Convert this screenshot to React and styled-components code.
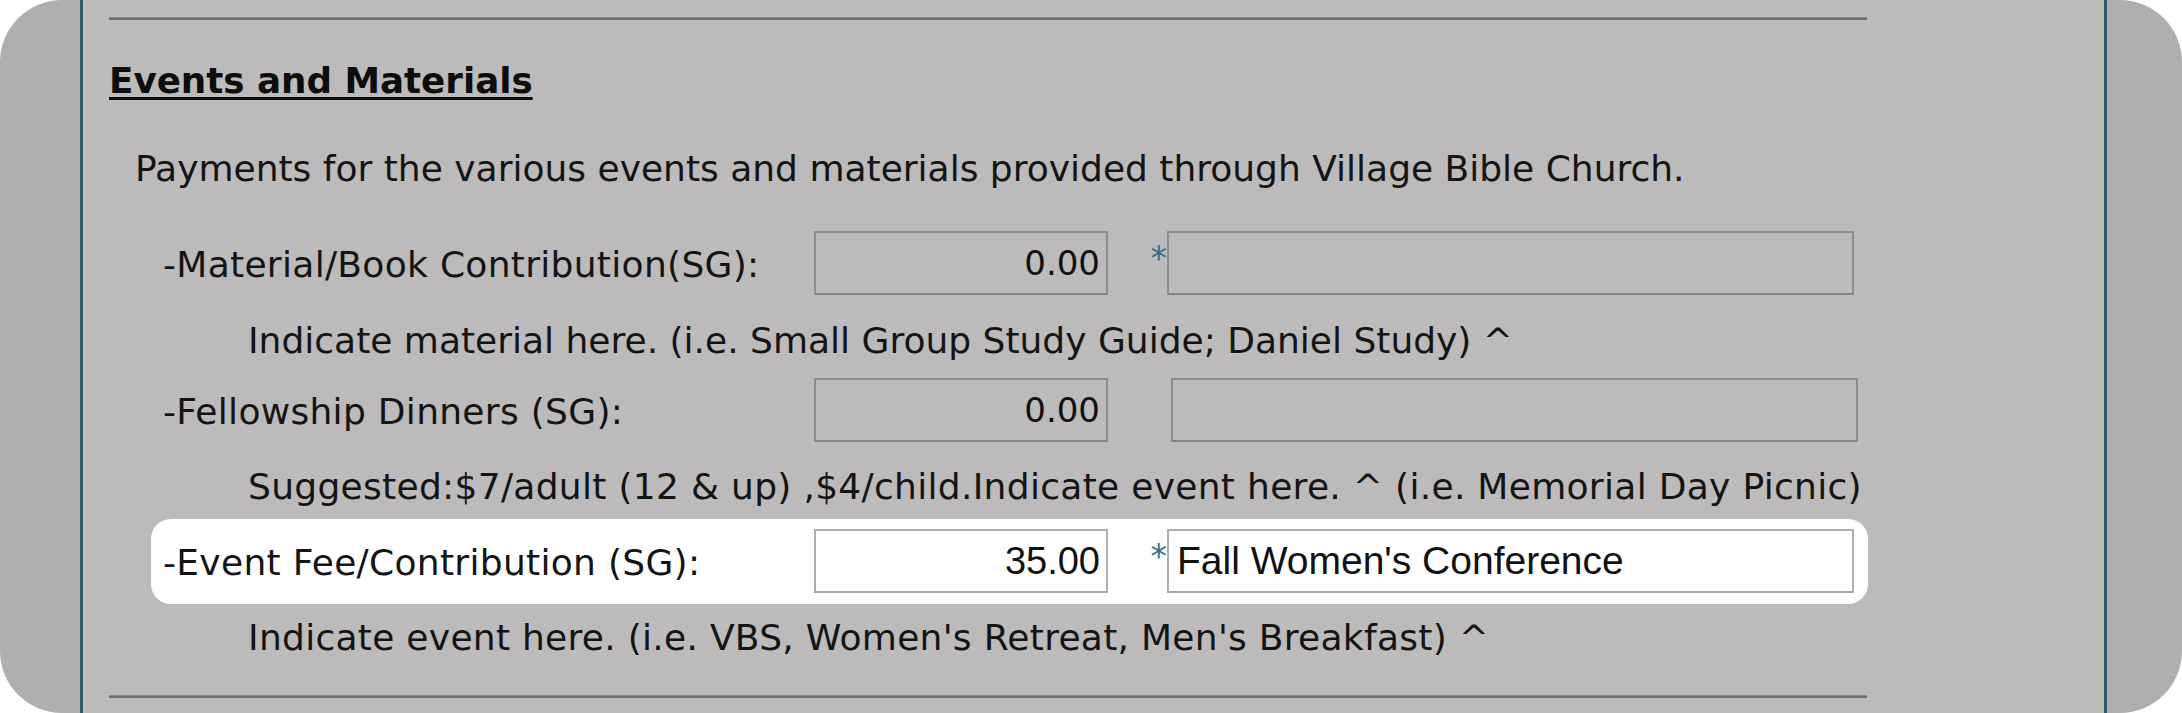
import React from "react";
import styled, { createGlobalStyle } from "styled-components";

const GlobalStyle = createGlobalStyle`
  html, body {
    margin: 0;
    padding: 0;
    background: #ffffff;
    overflow: hidden;
  }
  * {
    box-sizing: border-box;
  }
`;

const Page = styled.div`
  width: 2182px;
  height: 713px;
  background: #b0afb0;
  border-radius: 62px;
  padding: 0 75px 0 80px;
  font-family: "DejaVu Sans", Verdana, sans-serif;
  color: #141414;
`;

const Panel = styled.div`
  height: 100%;
  background: #bcbabb;
  border-left: 3px solid #2c5b68;
  border-right: 3px solid #2c5b68;
  padding: 17px 237px 0 26px;
  display: flex;
  flex-direction: column;
`;

const Rule = styled.div`
  height: 3px;
  background: #6f6e6f;
  border-top: 1px solid #8a898a;
  margin-top: ${(p) => p.$top || 0}px;
`;

const Heading = styled.h2`
  margin: 39px 0 0 0;
  font-size: 35.7px;
  line-height: 44px;
  font-weight: bold;
  color: #0c0c0c;
  text-decoration: underline;
  text-decoration-thickness: 3px;
  text-underline-offset: 4px;
  align-self: flex-start;
`;

const Intro = styled.p`
  margin: 44px 0 0 26px;
  font-size: 36px;
  line-height: 44px;
  white-space: nowrap;
`;

const Hint = styled.div`
  margin: ${(p) => p.$top}px 0 0 139px;
  font-size: 36px;
  line-height: 44px;
  letter-spacing: ${(p) => p.$spacing || 0}px;
  white-space: nowrap;
`;

const Row = styled.div`
  display: flex;
  align-items: center;
  height: 64px;
  margin-top: ${(p) => p.$top || 0}px;
  padding-left: ${(p) => (p.$inset ? 12 : 54)}px;
`;

const Highlight = styled.div`
  margin: 10px -1px 0 42px;
  padding: 10px 0 11px 0;
  background: #ffffff;
  border-radius: 20px;
`;

const Label = styled.span`
  width: 651px;
  flex: none;
  font-size: 36px;
  line-height: 44px;
  letter-spacing: 0.3px;
  padding-top: 3px;
  white-space: nowrap;
`;

const Amount = styled.input`
  width: 294px;
  height: 64px;
  flex: none;
  text-align: right;
  padding: 0 6px 0 8px;
  margin: 0;
  outline: none;
  color: #111111;
  font-family: ${(p) =>
    p.$active ? '"Liberation Sans", Arial, sans-serif' : '"DejaVu Sans", Verdana, sans-serif'};
  font-size: ${(p) => (p.$active ? 38 : 34)}px;
  background: ${(p) => (p.$active ? "#ffffff" : "transparent")};
  border: 2px solid ${(p) => (p.$active ? "#aeaeae" : "#8e8d8e")};
  border-bottom-color: ${(p) => (p.$active ? "#a4a4a4" : "#858485")};
`;

const Star = styled.span`
  width: ${(p) => (p.$blank ? 63 : 59)}px;
  flex: none;
  text-align: right;
  padding-right: 0;
  margin-top: -8px;
  font-size: 33px;
  line-height: 30px;
  color: #2f7285;
`;

const Detail = styled(Amount)`
  width: 687px;
  text-align: left;
  padding: 0 8px 0 8px;
  font-size: ${(p) => (p.$active ? 39 : 34)}px;
`;

const Field = ({ label, amount, detail, star, active, inset, top }) => (
  <Row $top={top} $inset={inset}>
    <Label>{label}</Label>
    <Amount readOnly value={amount} $active={active} />
    <Star $blank={!star}>{star ? "*" : ""}</Star>
    <Detail readOnly value={detail} $active={active} />
  </Row>
);

export default function App() {
  return (
    <>
      <GlobalStyle />
      <Page>
        <Panel>
          <Rule />
          <Heading>Events and Materials</Heading>
          <Intro>
            Payments for the various events and materials provided through Village Bible Church.
          </Intro>
          <Field
            top={40}
            label="-Material/Book Contribution(SG):"
            amount="0.00"
            detail=""
            star
          />
          <Hint $top={24}>
            Indicate material here. (i.e. Small Group Study Guide; Daniel Study) ^
          </Hint>
          <Field top={15} label="-Fellowship Dinners (SG):" amount="0.00" detail="" />
          <Hint $top={23} $spacing={0.3}>
            Suggested:$7/adult (12 &amp; up) ,$4/child.Indicate event here. ^ (i.e. Memorial Day Picnic)
          </Hint>
          <Highlight>
            <Field
              inset
              active
              star
              label="-Event Fee/Contribution (SG):"
              amount="35.00"
              detail="Fall Women's Conference"
            />
          </Highlight>
          <Hint $top={12} $spacing={0.28}>
            Indicate event here. (i.e. VBS, Women's Retreat, Men's Breakfast) ^
          </Hint>
          <Rule $top={35} />
        </Panel>
      </Page>
    </>
  );
}
